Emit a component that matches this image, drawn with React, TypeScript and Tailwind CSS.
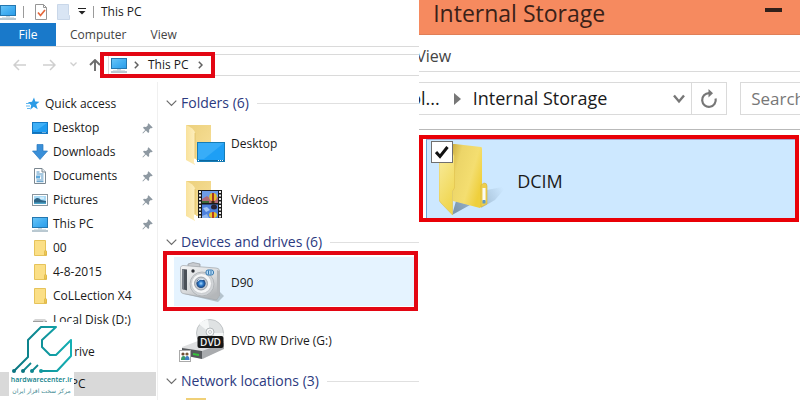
import React from "react";

type IconProps = { className?: string };

function Monitor({ className = "" }: IconProps) {
  return (
    <svg className={`shrink-0 ${className}`} width="16" height="16" viewBox="0 0 16 16" aria-hidden="true">
      <defs>
        <linearGradient id="screen" x1="0" y1="0" x2="1" y2="1">
          <stop offset="0" stopColor="#6cc6f7" />
          <stop offset="0.5" stopColor="#45b0f2" />
          <stop offset="1" stopColor="#2a9be8" />
        </linearGradient>
      </defs>
      <rect x="0.5" y="1.5" width="15" height="10" fill="url(#screen)" stroke="#2477b0" />
      <path d="M6 12h4v1.500h-4z" fill="#c9d6de" />
      <path d="M0 15h16" stroke="#8ba3b3" strokeWidth="1.200" />
      <path d="M2 13.700h12" stroke="#c4d3dc" strokeWidth="0.800" />
    </svg>
  );
}

function Star() {
  return (
    <svg className="shrink-0" width="14" height="14" viewBox="0 0 14 14" aria-hidden="true">
      <path d="M8 0.500l1.300 4 4.200.2-3.300 2.800 1.500 4.800-4-2.500-3.500 3 1-4.500L2 5.300l4-.6z" fill="#2b9be6" />
      <path d="M0 6.500h4M0 9h4M1 11.500h3" stroke="#62b8ef" strokeWidth="1" />
    </svg>
  );
}

function DesktopIcon() {
  return (
    <svg className="shrink-0" width="16" height="14" viewBox="0 0 16 14" aria-hidden="true">
      <rect x="0.500" y="1.500" width="15" height="11" fill="#1f9cf0" stroke="#1579c4" />
      <path d="M1 2h14L5 9H1z" fill="#3fb0f7" />
      <path d="M1 11.500h14" stroke="#1272b8" />
      <path d="M10.500 11.500h4" stroke="#d8efff" strokeDasharray="1 1" />
    </svg>
  );
}

function DownloadIcon() {
  return (
    <svg className="shrink-0" width="16" height="16" viewBox="0 0 16 16" aria-hidden="true">
      <path d="M5 0.500h6v6.500h4.500L8 15.500 0.500 7H5z" fill="#3a8fd8" stroke="#2a78c0" strokeWidth="0.700" />
    </svg>
  );
}

function DocumentIcon() {
  return (
    <svg className="shrink-0" width="16" height="16" viewBox="0 0 16 16" aria-hidden="true">
      <path d="M2.500 0.500h7.500l3.500 3.500v11.500h-11z" fill="#fff" stroke="#7b8790" />
      <path d="M10 0.500v3.500h3.500" fill="#e7edf1" stroke="#7b8790" />
      <path d="M4.500 4h3M4.500 6h7M8.500 8h3M4.500 12h7M4.500 13.700h7" stroke="#4e92c2" />
      <path d="M4 7.500h4v3h-4z" fill="#5fa9dc" />
      <path d="M9 10h2.500" stroke="#4e92c2" />
    </svg>
  );
}

function PictureIcon() {
  return (
    <svg className="shrink-0" width="16" height="12" viewBox="0 0 16 12" aria-hidden="true">
      <rect x="0.500" y="0.500" width="15" height="11" fill="#fff" stroke="#8a969e" />
      <path d="M2 2h12v8H2z" fill="#a9daf5" />
      <path d="M2 6c3-3 5-2 7 0l5 1v3H2z" fill="#2e6485" />
      <path d="M2 8.500h12V10H2z" fill="#4ea5c9" />
      <path d="M8 4h4" stroke="#fff" />
    </svg>
  );
}

function SmallFolder() {
  return (
    <svg className="shrink-0" width="16" height="16" viewBox="0 0 16 16" aria-hidden="true">
      <path d="M2.500 0.500h11v10l1 1v4h-12z" fill="#fbdf86" stroke="#e6c35a" />
      <path d="M12.500 15v-3.500l1-1.500 1 1.500V15z" fill="#f0c850" stroke="#d9b146" strokeWidth="0.700" />
    </svg>
  );
}

function DiskIcon() {
  return (
    <svg className="shrink-0" width="16" height="16" viewBox="0 0 16 16" aria-hidden="true">
      <path d="M3 7h10l2 2H1z" fill="#d5d5d5" />
      <path d="M1 9h14v2H1z" fill="#9d9d9d" />
      <path d="M11 10h2" stroke="#fff" />
    </svg>
  );
}

function Pin() {
  return (
    <svg className="shrink-0" width="11" height="11" viewBox="0 0 11 11" aria-hidden="true">
      <path d="M6.500 0.300l4.200 4.200-1 .7-.9-.2-1.700 1.800.1 2.200-1 .9-2.300-2.300L1 10.500l-.6-.5 2.800-3L1 4.800l.9-1 2.200.2L5.900 2.200l-.2-1z" fill="#8e99a2" />
    </svg>
  );
}

function BigFolderBase() {
  return (
    <>
      <defs>
        <linearGradient id="fback" x1="0" y1="0" x2="1" y2="1">
          <stop offset="0" stopColor="#ecd07c" />
          <stop offset="1" stopColor="#f8e09a" />
        </linearGradient>
        <linearGradient id="ffront" x1="0" y1="0" x2="1" y2="0">
          <stop offset="0" stopColor="#f9e29c" />
          <stop offset="1" stopColor="#fdeebd" />
        </linearGradient>
      </defs>
      <path d="M1 2h25v35H10z" fill="url(#fback)" />
      <path d="M1 2q8 3 9 8v32L1 37z" fill="url(#ffront)" />
      <path d="M10 10v25" stroke="#e0bf62" strokeWidth="0.800" />
      <path d="M9 36h2v3l-2 2z" fill="#fff" />
    </>
  );
}

function DesktopFolder() {
  return (
    <svg className="shrink-0" width="41" height="42" viewBox="0 0 41 42" aria-hidden="true">
      <BigFolderBase />
      <rect x="12.500" y="19.500" width="27" height="19" fill="#1e9ff5" stroke="#157cb6" />
      <path d="M13 20h26L19 36h-6z" fill="#38adf8" />
      <path d="M13 37.500h26" stroke="#0b679f" />
      <path d="M33 37.500h6M13 37.500h2" stroke="#fff" strokeDasharray="1 1" />
    </svg>
  );
}

function VideosFolder() {
  return (
    <svg className="shrink-0" width="41" height="42" viewBox="0 0 41 42" aria-hidden="true">
      <BigFolderBase />
      <g transform="translate(0 2)">
        <path d="M13 9h24v28H13z" fill="#1b1b1b" />
        <path d="M15 10v27M35 10v27" stroke="#e9e9e9" strokeWidth="2" strokeDasharray="2 1.500" />
        <path d="M17 10h16v12H17z" fill="#6d9be6" />
        <path d="M17 23.500h16V37H17z" fill="#4d80dc" />
        <path d="M17 18l5-3 4 3 7-2v6H17z" fill="#b06a78" />
        <path d="M17 20h7v2h-7z" fill="#3e6a38" />
        <ellipse cx="28" cy="16" rx="3.800" ry="4" fill="#e5bf2b" />
        <path d="M27 12h2v8h-2z" fill="#a8331f" />
        <path d="M26.500 20h3v2h-3z" fill="#40280f" />
        <ellipse cx="29" cy="26" rx="3" ry="2.500" fill="#2a2130" />
        <path d="M18 27l4-1 3 3-4 2z" fill="#a6c7f5" />
        <ellipse cx="28" cy="34" rx="4" ry="3" fill="#e8c32c" />
        <path d="M27 31h2v6h-2z" fill="#b93a22" />
        <path d="M17 35l5-2 2 4h-7z" fill="#8fb5ef" />
      </g>
    </svg>
  );
}

function Camera() {
  return (
    <svg className="shrink-0" width="46" height="42" viewBox="0 0 46 42" aria-hidden="true">
      <defs>
        <linearGradient id="body" x1="0" y1="0" x2="0.600" y2="1">
          <stop offset="0" stopColor="#f4f5f6" />
          <stop offset="0.600" stopColor="#d9dbdd" />
          <stop offset="1" stopColor="#b4b7ba" />
        </linearGradient>
        <radialGradient id="lens">
          <stop offset="0" stopColor="#a7d8ff" />
          <stop offset="0.500" stopColor="#2b78c8" />
          <stop offset="1" stopColor="#173d73" />
        </radialGradient>
      </defs>
      <path d="M5 32l34 8 6-6-5-5z" fill="#b5c3cd" />
      <path d="M9 2l5-1.500 7 1.500v3l-12-.5z" fill="#c9ccd0" stroke="#92969b" strokeWidth="0.700" />
      <path d="M1.500 5.500Q2 3.500 4 3.500L37 6q3 0 3.500 2.500v25L37.500 38 4 31.500q-2-.5-2.200-2.500z" fill="url(#body)" stroke="#a2a6aa" strokeWidth="0.700" />
      <path d="M38 8l2.500 1v24L38 37z" fill="#b3b6b9" />
      <path d="M3 7l5 .5v21L3 27z" fill="#4b5058" />
      <path d="M3 7l2 .3v20.500L3 27z" fill="#777d86" />
      <circle cx="23" cy="22" r="12" fill="#d2d5d8" stroke="#abafb3" strokeWidth="0.800" />
      <circle cx="22.500" cy="21.500" r="10" fill="#f5f6f7" stroke="#c0c3c6" strokeWidth="0.800" />
      <circle cx="22" cy="21.500" r="6.500" fill="#c3c9d1" stroke="#8b929a" strokeWidth="0.800" />
      <circle cx="22" cy="21.500" r="4.600" fill="url(#lens)" />
      <path d="M18.500 19.500q2-3.500 6-2" stroke="#e7f4ff" fill="none" />
      <circle cx="14" cy="9" r="1.700" fill="#2d3035" />
      <rect x="27" y="8" width="7.500" height="5" rx="2" fill="#b8dcf8" stroke="#397bb1" />
      <path d="M29.500 8.500v4M32 8.500v4" stroke="#397bb1" />
    </svg>
  );
}

function DvdDrive() {
  return (
    <svg className="shrink-0" width="46" height="44" viewBox="0 0 46 44" aria-hidden="true">
      <path d="M3 28l16-6h26v7L24 40 3 36z" fill="#dedfe0" />
      <path d="M3 29l20 3v8L3 36z" fill="#55585b" />
      <path d="M23 32l22-8v6L23 40z" fill="#a9abae" />
      <path d="M14 34l6 1v2l-6-1z" fill="#35c43b" />
      <circle cx="31" cy="14" r="13.500" fill="#dfe2e3" stroke="#c0c4c6" />
      <path d="M31 14L20 5a14 14 0 0 1 9-4.500zM31 14l12 7a14 14 0 0 0 1.500-7z" fill="#f5f7f7" />
      <circle cx="31" cy="13" r="4" fill="#f8f9f9" stroke="#b4b9bb" />
      <circle cx="31" cy="13" r="1.500" fill="#fff" stroke="#c7cbcd" />
      <rect x="18.500" y="17" width="26" height="12" rx="2" fill="#171717" />
      <text x="31.500" y="27" textAnchor="middle" fontSize="10" fontWeight="600" fill="#f2f2f2" fontFamily="Open Sans, sans-serif">DVD</text>
      <rect x="0.500" y="31.500" width="11" height="11" fill="#fff" stroke="#aaa" />
      <circle cx="4" cy="35" r="1.600" fill="#6c4c34" />
      <circle cx="8" cy="35" r="1.600" fill="#7a5b3a" />
      <path d="M2 41q0-4 2.500-4T7 41z" fill="#3b9a69" />
      <path d="M6 41q0-4 2.200-4t2.300 4z" fill="#3d7ec4" />
    </svg>
  );
}

function DcimFolder() {
  return (
    <svg width="68" height="76" viewBox="0 0 68 76" aria-hidden="true">
      <defs>
        <linearGradient id="dback" x1="0" y1="0" x2="1" y2="0.600">
          <stop offset="0" stopColor="#c9a93c" />
          <stop offset="0.300" stopColor="#ecd568" />
          <stop offset="0.700" stopColor="#f4de70" />
          <stop offset="1" stopColor="#efcf3c" />
        </linearGradient>
        <linearGradient id="dfront" x1="0" y1="0" x2="0.400" y2="1">
          <stop offset="0" stopColor="#f8eca0" />
          <stop offset="1" stopColor="#f0d650" />
        </linearGradient>
        <linearGradient id="dshade" x1="0" y1="0.600" x2="1" y2="0.300">
          <stop offset="0" stopColor="#7d98b0" />
          <stop offset="1" stopColor="#cde8ff" />
        </linearGradient>
      </defs>
      <path d="M13 74l4-14 14 4zM42 67l6-18 20-4-12 14z" fill="url(#dshade)" />
      <path d="M12 3h4l26 3q1 0 1 2v57l-2 2-27-7z" fill="url(#dback)" />
      <path d="M0 11l14 1 1.500 3v32l-2 3v24L2 62q-2-2-2-4z" fill="url(#dfront)" stroke="#dfc04c" strokeWidth="0.600" />
      <path d="M42 44l3-2q3 0 3 3v18l-6 3z" fill="#edcf50" stroke="#d3b13a" strokeWidth="0.600" />
      <path d="M43.500 47h3v13h-3z" fill="#fbfbf2" />
      <path d="M43.500 59h3v3.500h-3z" fill="#5d98c6" />
    </svg>
  );
}

function Chevron() {
  return (
    <svg className="shrink-0" width="11" height="7" viewBox="0 0 11 7" aria-hidden="true">
      <path d="M0.700 0.700l4.800 4.800 4.800-4.800" fill="none" stroke="#6b6b6b" strokeWidth="1.200" />
    </svg>
  );
}

function Crumb() {
  return (
    <svg className="shrink-0" width="5" height="8" viewBox="0 0 5 8" aria-hidden="true">
      <path d="M0.800 0.800L4 4 0.800 7.200" fill="none" stroke="#606060" strokeWidth="1.500" />
    </svg>
  );
}

function Arrow({ className = "" }: IconProps) {
  return (
    <svg className={`block ${className}`} width="13" height="12" viewBox="0 0 13 12" aria-hidden="true">
      <path d="M6 1L1 6l5 5M1 6h12" fill="none" stroke="currentColor" strokeWidth="1.500" />
    </svg>
  );
}

function SideItem({ icon, label, pinned = false }: { icon: React.ReactNode; label: string; pinned?: boolean }) {
  return (
    <li>
      <button className="flex h-6 w-full items-center gap-[5px] pl-8 pr-1 text-left">
        {icon}
        <span className="flex-1 whitespace-nowrap">{label}</span>
        {pinned && <Pin />}
      </button>
    </li>
  );
}

function Heading({ children }: { children: React.ReactNode }) {
  return (
    <h2 className="flex h-6 items-center gap-1 pl-2">
      <Chevron />
      <span className="whitespace-nowrap text-[14px] leading-5 text-[#2c3a80]">{children}</span>
      <span className="ml-1 h-px flex-1 bg-[#e0e0e0]" />
    </h2>
  );
}

function Logo() {
  return (
    <div className="absolute left-[9px] top-[322px] flex w-[65px] flex-col items-center bg-white pt-1">
      <svg width="62" height="48" viewBox="0 0 62 48" aria-hidden="true">
        <defs>
          <linearGradient id="teal" x1="0" y1="0" x2="1" y2="0">
            <stop offset="0" stopColor="#0b7580" />
            <stop offset="1" stopColor="#14b0b4" />
          </linearGradient>
        </defs>
        <path d="M3 45L17 31V14L30 1H45L31 14V21L39 29H45L60 14V30L46 45H30" fill="none" stroke="url(#teal)" strokeWidth="2" strokeLinejoin="round" />
        <path d="M12 45l8-8M21 45l6-6" stroke="#0e8790" strokeWidth="1.800" />
        <circle cx="3" cy="45" r="2" fill="#0b7580" />
        <circle cx="12" cy="45" r="2" fill="#0b7580" />
        <circle cx="21" cy="45" r="2" fill="#0d8790" />
        <circle cx="30" cy="45" r="2" fill="#109aa0" />
      </svg>
      <span className="whitespace-nowrap font-['Open_Sans',sans-serif] text-[7px] font-semibold leading-[12px] text-[#0d8088]">hardwarecenter.ir</span>
      <span dir="rtl" lang="fa" className="whitespace-nowrap font-['DejaVu_Sans',sans-serif] text-[6px] leading-[10px] text-[#3d8890]">مرکز سخت افزار ایران</span>
    </div>
  );
}

function ThisPcWindow() {
  return (
    <section className="relative flex w-[52.4%] shrink-0 flex-col bg-white text-xs text-[#1a1a1a]">
      <header className="flex h-[23px] shrink-0 items-center">
        <Monitor />
        <span className="ml-[7px] h-3 w-px bg-[#9a9a9a]" />
        <svg className="ml-[11px]" width="12" height="16" viewBox="0 0 12 16" aria-hidden="true">
          <path d="M0.500 0.500h8l3 3v12h-11z" fill="#fff" stroke="#969696" />
          <path d="M8.500 0.500v3h3" fill="none" stroke="#969696" />
          <path d="M3 8.500l2.500 3L10 6" fill="none" stroke="#e4673b" strokeWidth="1.700" />
        </svg>
        <svg className="ml-[10px]" width="13" height="16" viewBox="0 0 13 16" aria-hidden="true">
          <path d="M0.500 0.500h11v10l1 1v4h-12z" fill="#d9e5f4" stroke="#c9d7e9" />
        </svg>
        <svg className="ml-2" width="8" height="7" viewBox="0 0 8 7" aria-hidden="true">
          <path d="M0 0.500h8" stroke="#222" />
          <path d="M0.500 3h7L4 6.500z" fill="#222" />
        </svg>
        <span className="ml-[7px] h-3 w-px bg-[#9a9a9a]" />
        <h1 className="ml-[7px] leading-4">This PC</h1>
      </header>
      <nav className="flex h-6 shrink-0 border-b border-[#dadada] text-[#444]">
        <button className="w-14 bg-[#1979ca] text-white">File</button>
        <button className="ml-[14px]">Computer</button>
        <button className="ml-6">View</button>
      </nav>
      <div className="flex h-[35px] shrink-0 items-center">
        <button aria-label="Back" className="ml-[13px] text-[#cfcfcf]"><Arrow /></button>
        <button aria-label="Forward" className="ml-[17px] text-[#cfcfcf]"><Arrow className="rotate-180" /></button>
        <button aria-label="Recent locations" className="ml-[14px]">
          <svg className="block" width="7" height="5" viewBox="0 0 7 5" aria-hidden="true"><path d="M0.500 0.500l3 3 3-3" fill="none" stroke="#cfcfcf" strokeWidth="1.300" /></svg>
        </button>
        <button aria-label="Up" className="ml-3 text-[#6e6e6e]">
          <svg className="block" width="12" height="12" viewBox="0 0 12 12" aria-hidden="true"><path d="M1 6l5-5 5 5M6 1v11" fill="none" stroke="currentColor" strokeWidth="1.900" /></svg>
        </button>
        <div className="-ml-px flex h-[26px] w-[115px] shrink-0 items-center border-4 border-[#e30613]">
          <span className="ml-1 h-full w-px bg-[#dadada]" />
          <Monitor className="ml-[2px] mr-[7px]" />
          <Crumb />
          <button className="ml-[9px] mr-[9px] whitespace-nowrap">This PC</button>
          <Crumb />
        </div>
        <div className="h-[22px] flex-1 border-y border-[#dadada]" />
      </div>
      <div className="flex min-h-0 flex-1 overflow-hidden">
        <aside className="w-[158px] shrink-0 border-r border-[#f0f0f0] pt-[10px]">
          <ul>
            <li>
              <button className="flex h-6 w-full items-center gap-[5px] pl-[26px] text-left"><Star />Quick access</button>
            </li>
            <SideItem icon={<DesktopIcon />} label="Desktop" pinned />
            <SideItem icon={<DownloadIcon />} label="Downloads" pinned />
            <SideItem icon={<DocumentIcon />} label="Documents" pinned />
            <SideItem icon={<PictureIcon />} label="Pictures" pinned />
            <SideItem icon={<Monitor />} label="This PC" pinned />
            <SideItem icon={<SmallFolder />} label="00" />
            <SideItem icon={<SmallFolder />} label="4-8-2015" />
            <SideItem icon={<SmallFolder />} label="CoLLection X4" />
            <SideItem icon={<DiskIcon />} label="Local Disk (D:)" />
          </ul>
          <button className="mt-2 flex h-6 w-full items-center pl-[42px]">OneDrive</button>
          <button className="mt-2 flex h-6 w-[156px] items-center bg-[#d9d9d9] pl-[45px]">This PC</button>
        </aside>
        <main className="min-w-0 flex-1 overflow-hidden pt-[9px]">
          <Heading>Folders (6)</Heading>
          <button className="flex h-14 w-full items-center gap-[5px] pl-[27px] pt-px"><DesktopFolder />Desktop</button>
          <button className="flex h-14 w-full items-center gap-[5px] pl-[27px] pt-px"><VideosFolder />Videos</button>
          <div className="pt-[3px]"><Heading>Devices and drives (6)</Heading></div>
          <div className="-mt-[3px] pl-[5px] pr-px">
            <button className="flex h-[60px] w-full items-center border-4 border-[#e30613] pl-[7px]">
              <span className="flex h-[49px] flex-1 items-center gap-[6px] bg-[#e5f3ff] pl-[5px] pt-1"><Camera />D90</span>
            </button>
          </div>
          <button className="flex h-14 w-full items-center gap-[6px] pl-[21px] pt-1"><DvdDrive />DVD RW Drive (G:)</button>
          <div className="pt-[2px]"><Heading>Network locations (3)</Heading></div>
          <div className="pl-7 pt-[5px]"><div className="h-4 w-5 bg-[#f0d077]" /></div>
        </main>
      </div>
      <Logo />
    </section>
  );
}

function StorageWindow() {
  return (
    <section className="flex min-w-0 flex-1 flex-col overflow-hidden bg-white text-[#1a1a1a]">
      <header className="flex h-[35px] shrink-0 items-start justify-between border-b border-[#e07f58] bg-[#f68a5f] pl-[14px] pr-[18px]">
        <h1 className="whitespace-nowrap text-[23px] leading-[26px] text-[#3a2118]">Internal Storage</h1>
        <button aria-label="Minimize" className="mt-2 h-1 w-[17px] bg-[#30201a]" />
      </header>
      <nav className="flex h-[37px] shrink-0 items-center border-b border-[#dadada]">
        <button className="-ml-[3px] pt-[6px] text-[16px] leading-5 text-[#444]">View</button>
      </nav>
      <div className="flex h-[58px] shrink-0 items-center gap-[13px] border-b border-[#b9b9b9] pb-[4px]">
        <div className="flex h-[33px] w-[308px] shrink-0 items-center border border-l-0 border-[#dadada] text-[18px]">
          <button className="-ml-[9px]">ol...</button>
          <svg className="ml-[14px] shrink-0" width="7" height="12" viewBox="0 0 7 12" aria-hidden="true"><path d="M0 0l7 6-7 6z" fill="#777" /></svg>
          <button className="ml-3 flex-1 whitespace-nowrap text-left">Internal Storage</button>
          <button aria-label="Previous locations" className="mr-[6px]">
            <svg className="block" width="12" height="10" viewBox="0 0 12 10" aria-hidden="true"><path d="M1 1.500l5 6 5-6" fill="none" stroke="#777" strokeWidth="2.400" /></svg>
          </button>
          <button aria-label="Refresh" className="flex h-full w-[35px] items-center justify-center border-l border-[#dadada]">
            <svg width="18" height="20" viewBox="0 0 18 20" aria-hidden="true">
              <path d="M15.600 9.500A6.800 6.800 0 1 1 9 4.200" fill="none" stroke="#777" strokeWidth="2.200" />
              <path d="M8.500 0l4.500 4.200-4.500 4.300z" fill="#777" />
            </svg>
          </button>
        </div>
        <input aria-label="Search" placeholder="Search" className="h-[33px] w-20 shrink-0 border border-[#dadada] pl-[10px] text-[17px] placeholder:text-[#777]" />
      </div>
      <main className="pr-px pt-[5px]">
        <label className="flex h-[87px] items-stretch border-4 border-[#e90007] bg-white pl-[3px]">
          <span className="flex flex-1 items-center border-l border-t border-l-[#6aa5d8] border-t-[#a9a3cf] bg-[#cde8ff]">
            <span className="relative ml-3">
              <DcimFolder />
              <input type="checkbox" defaultChecked className="absolute -left-2 top-0 h-[22px] w-[22px] appearance-none border border-[#6f6f6f] bg-white" />
              <svg className="pointer-events-none absolute -left-1 top-1" width="14" height="14" viewBox="0 0 14 14" aria-hidden="true"><path d="M1 7l4 4.500L12.500 2" fill="none" stroke="#111" strokeWidth="3" /></svg>
            </span>
            <span className="ml-[10px] pt-1 text-[18px] leading-6">DCIM</span>
          </span>
        </label>
      </main>
    </section>
  );
}

export default function App() {
  return (
    <div className="flex h-screen overflow-hidden bg-white font-['Open_Sans','Noto_Sans',sans-serif]">
      <ThisPcWindow />
      <StorageWindow />
    </div>
  );
}
